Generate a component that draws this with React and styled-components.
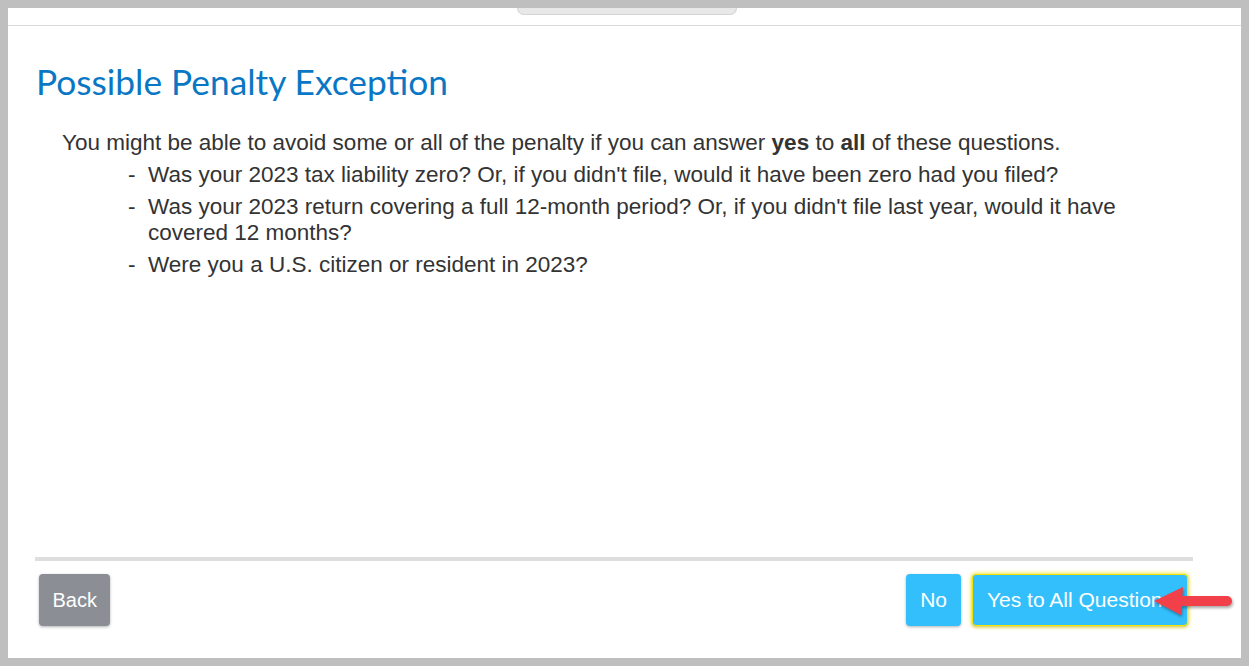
import React from 'react';
import styled, { createGlobalStyle } from 'styled-components';

const GlobalStyle = createGlobalStyle`
  html, body {
    margin: 0;
    padding: 0;
    background: #bfbfbf;
  }
  body {
    font-family: "Liberation Sans", Arial, sans-serif;
  }
`;

const Frame = styled.div`
  padding: 8px;
  height: 666px;
  box-sizing: border-box;
`;

const Panel = styled.div`
  background: #fff;
  height: 650px;
  display: flex;
  flex-direction: column;
`;

const TopBar = styled.div`
  height: 17px;
  border-bottom: 1px solid #d9d9d9;
  display: flex;
  justify-content: center;
  flex-shrink: 0;
`;

const Tab = styled.div`
  width: 218px;
  height: 6px;
  margin-left: 4px;
  background: #e8e8e8;
  border: 1px solid #d4d4d4;
  border-top: none;
  border-radius: 0 0 10px 10px;
`;

const Content = styled.div`
  flex: 1;
  padding: 36px 0 0 28px;
`;

const Title = styled.h1`
  margin: 0 0 28px 0;
  font-family: Lato, "Open Sans", sans-serif;
  font-weight: 400;
  font-size: 35.3px;
  line-height: 40px;
  color: #0a77c4;
`;

const Intro = styled.p`
  margin: 0 0 0 26px;
  font-size: 22.5px;
  line-height: 26px;
  color: #333;
`;

const QuestionList = styled.ul`
  list-style: none;
  margin: 6px 0 0 92px;
  padding: 0;
  width: 1025px;
`;

const Question = styled.li`
  position: relative;
  padding-left: 20px;
  margin-bottom: 6px;
  font-size: 22.5px;
  line-height: 26px;
  color: #333;

  &::before {
    content: '-';
    position: absolute;
    left: 0;
    top: 0;
  }
`;

const Footer = styled.div`
  flex-shrink: 0;
  padding: 0 48px 32px 27px;
`;

const Rule = styled.div`
  height: 4px;
  background: #dedede;
  margin-bottom: 13px;
`;

const ButtonRow = styled.div`
  display: flex;
  align-items: center;
  gap: 11px;
  padding-left: 4px;
  padding-right: 5px;
`;

const Spacer = styled.div`
  flex: 1;
`;

const Button = styled.button`
  position: relative;
  height: 52px;
  padding: 0 ${({ $pad }) => $pad || 14}px;
  border: ${({ $focus }) => ($focus ? '1.5px solid #f3e400' : 'none')};
  border-radius: 4px;
  background: ${({ $variant }) => ($variant === 'grey' ? '#8b8e95' : '#33bffb')};
  color: #fff;
  font-family: "Liberation Sans", Arial, sans-serif;
  font-size: ${({ $size }) => $size || 20}px;
  white-space: nowrap;
  box-shadow: ${({ $focus }) =>
    $focus ? '0 0 4px 1px rgba(250, 230, 0, 0.7), 0 1px 3px rgba(0,0,0,0.3)' : '0 1px 3px rgba(0,0,0,0.3)'};
`;

const Arrow = styled.svg`
  position: absolute;
  left: 181px;
  top: 12px;
  overflow: visible;
  filter: drop-shadow(1px 2px 1.5px rgba(0,0,0,0.35));
`;

export default function App() {
  return (
    <>
      <GlobalStyle />
      <Frame>
        <Panel>
          <TopBar>
            <Tab />
          </TopBar>
          <Content>
            <Title>Possible Penalty Exception</Title>
            <Intro>
              You might be able to avoid some or all of the penalty if you can answer <b>yes</b> to <b>all</b> of these questions.
            </Intro>
            <QuestionList>
              <Question>Was your 2023 tax liability zero? Or, if you didn't file, would it have been zero had you filed?</Question>
              <Question>Was your 2023 return covering a full 12-month period? Or, if you didn't file last year, would it have covered 12 months?</Question>
              <Question>Were you a U.S. citizen or resident in 2023?</Question>
            </QuestionList>
          </Content>
          <Footer>
            <Rule />
            <ButtonRow>
              <Button $variant="grey" $pad={13.5}>Back</Button>
              <Spacer />
              <Button $size={21} $pad={14}>No</Button>
              <Button $focus $size={21} $pad={14}>
                Yes to All Questions
                <Arrow width="78" height="28" viewBox="0 0 78 28">
                  <path d="M27 9 L73 9 A5 5 0 0 1 73 19 L27 19 Z" fill="#f2404a" />
                  <path d="M0 14 L29 0 L27 28 Z" fill="#f2404a" />
                </Arrow>
              </Button>
            </ButtonRow>
          </Footer>
        </Panel>
      </Frame>
    </>
  );
}
